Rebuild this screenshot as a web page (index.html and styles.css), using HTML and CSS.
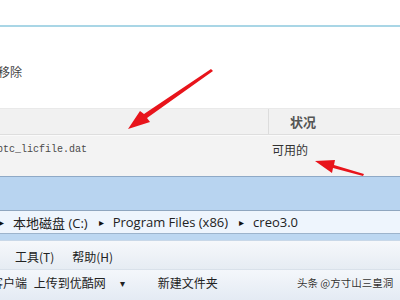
FILE: index.html
```html
<!DOCTYPE html>
<html>
<head>
<meta charset="utf-8">
<link rel="stylesheet" href="styles.css">
</head>
<body>
<div class="page">
  <div class="top"></div>
  <div class="dialog">
    <div class="remove">移除</div>
  </div>
  <div class="list">
    <div class="hdr">
      <div class="col-name"></div>
      <div class="col-status">状况</div>
    </div>
    <div class="row">
      <div class="col-name mono">ptc_licfile.dat</div>
      <div class="col-status">可用的</div>
    </div>
  </div>
  <div class="explorer">
    <div class="titlebar"></div>
    <div class="address">
      <span class="tri">&#9656;</span><span class="crumb">本地磁盘 (C:)</span>
      <span class="tri">&#9656;</span><span class="crumb">Program Files (x86)</span>
      <span class="tri">&#9656;</span><span class="crumb">creo3.0</span>
    </div>
    <div class="strip"></div>
    <div class="menubar">
      <span class="menu">工具(T)</span>
      <span class="menu">帮助(H)</span>
    </div>
    <div class="toolbar">
      <span class="tool first">客户端 上传到优酷网</span>
      <span class="drop">&#9662;</span>
      <span class="tool">新建文件夹</span>
    </div>
  </div>
  <svg class="arrows" width="400" height="300" viewBox="0 0 400 300">
    <polygon points="213,71 147,118 150,122 128,129 140,111 144,114 211,69" fill="#e8141b"/>
    <polygon points="363,176 333,168 332,173 315,161 335,160 334,165 364,174" fill="#e8141b"/>
  </svg>
  <div class="watermark">头条 @方寸山三皇洞</div>
</div>
</body>
</html>
```
FILE: styles.css
```css
html, body {
  margin: 0;
  padding: 0;
  background: #fff;
}
.page {
  position: relative;
  width: 400px;
  height: 300px;
  overflow: hidden;
  font-family: "Noto Sans CJK SC", "Noto Sans", sans-serif;
  font-size: 12px;
  color: #333;
}
.top {
  height: 25px;
  background: #fff;
  border-bottom: 2px solid #a9d6e6;
}
.dialog {
  height: 81px;
  background: #fff;
  display: flex;
  align-items: flex-start;
}
.remove {
  margin-top: 35px;
  margin-left: -2px;
  font-size: 12px;
  line-height: 20px;
  color: #444;
}
.list {
  background: #f3f3f3;
}
.hdr {
  height: 27px;
  display: flex;
  background: #f1f1f1;
  border-top: 1px solid #e9e9e9;
  border-bottom: 1px solid #dedede;
  box-sizing: border-box;
}
.hdr .col-name {
  width: 268px;
  border-right: 1px solid #dcdcdc;
}
.hdr .col-status {
  padding-left: 21px;
  font-weight: bold;
  font-size: 13px;
  line-height: 26px;
  color: #555;
}
.row {
  height: 41px;
  display: flex;
  border-top: 1px solid #fafafa;
  box-sizing: border-box;
}
.row .col-name {
  width: 269px;
  margin-left: -3px;
  padding-top: 6px;
  line-height: 16px;
  white-space: nowrap;
}
.mono {
  font-family: "Liberation Mono", monospace;
  font-size: 10px;
  color: #4a4a4a;
}
.row .col-status {
  padding-left: 6px;
  padding-top: 6px;
  line-height: 16px;
  font-size: 12px;
  color: #333;
}
.explorer {
  background: #b9d5f1;
  border-top: 1px solid #8ea9c6;
}
.titlebar {
  height: 33px;
  background: #b8d4f0;
}
.address {
  height: 22px;
  background: #eef5fd;
  border-top: 1px solid #8fa6bf;
  border-bottom: 1px solid #9db4cc;
  display: flex;
  align-items: center;
  font-family: "Open Sans", "Noto Sans CJK SC", sans-serif;
  font-size: 13px;
  color: #222;
  white-space: nowrap;
}
.tri {
  font-size: 10px;
  color: #111;
  margin: 0 9px 0 -1px;
}
.crumb {
  margin-right: 12px;
}
.strip {
  height: 6px;
  background: #bcd7f1;
  border-bottom: 1px solid #c9d8e8;
}
.menubar {
  height: 29px;
  background: linear-gradient(#f6f8fb, #e6ecf3);
  border-bottom: 1px solid #d9e1ea;
  display: flex;
  align-items: center;
  padding-top: 2px;
  box-sizing: border-box;
  padding-left: 15px;
  gap: 18px;
  font-size: 12px;
  color: #222;
}
.toolbar {
  height: 31px;
  background: linear-gradient(#f4f7fb, #e3eaf3);
  display: flex;
  align-items: flex-start;
  padding-top: 4px;
  box-sizing: border-box;
  font-size: 12px;
  line-height: 18px;
  color: #222;
  white-space: nowrap;
}
.tool.first {
  margin-left: -9px;
  word-spacing: 4px;
}
.drop {
  font-size: 10px;
  margin-left: 14px;
  margin-right: 33px;
}
.arrows {
  position: absolute;
  left: 0;
  top: 0;
}
.watermark {
  position: absolute;
  left: 297px;
  top: 274px;
  font-size: 10.5px;
  line-height: 18px;
  color: #333;
  white-space: nowrap;
  text-shadow: 0 0 2px #fff;
}
```
